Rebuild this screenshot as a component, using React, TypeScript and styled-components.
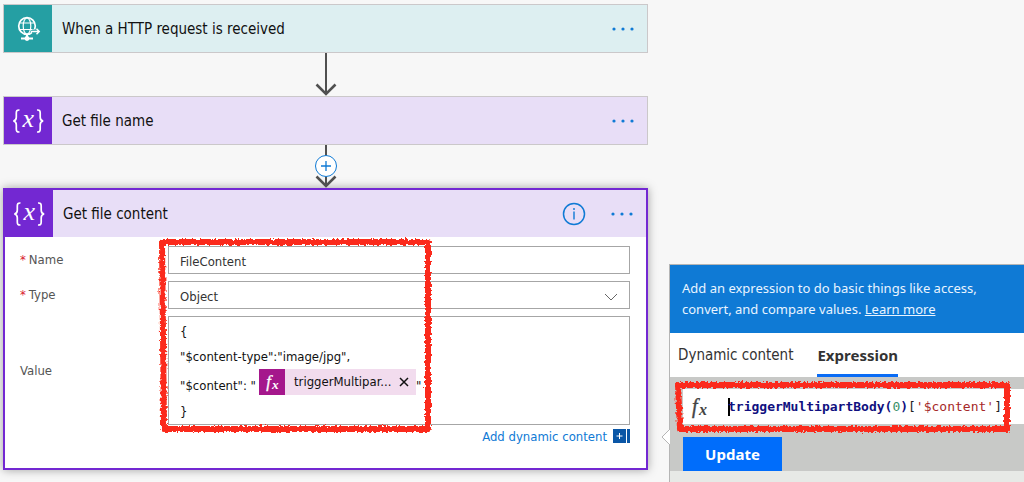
import React from 'react';
import styled, { createGlobalStyle, css } from 'styled-components';

const ui = '"DejaVu Sans Condensed", "DejaVu Sans", sans-serif';
const noto = '"Noto Sans", "Open Sans", sans-serif';
const blue = '#0f7ad5';
const purple = '#7328d2';

const GlobalStyle = createGlobalStyle`
  * { box-sizing: border-box; }
  body { margin: 0; background: #f7f7f7; font-family: ${ui}; color: #111; }
  button, input, select { font: inherit; color: inherit; }
  svg { display: block; }
`;

const Page = styled.main`
  display: grid;
  grid-template-columns: minmax(0, 645fr) minmax(0, 355fr);
  column-gap: 21px;
  padding-left: 3px;
  min-height: 100vh;
  overflow: hidden;
`;

const Flow = styled.section`
  display: flex;
  flex-direction: column;
  padding: 4px 0 12px;
`;

const Card = styled.article<{ $selected?: boolean }>`
  background: #fff;
  border: 1px solid #cbc8ca;
  ${p => p.$selected && css`
    border: 2px solid ${purple};
    box-shadow: 0 0 9px rgba(0, 0, 0, 0.35);
  `}
`;

const CardHeader = styled.header<{ $tint: string }>`
  display: flex;
  align-items: center;
  height: 47px;
  padding-right: 8px;
  background: ${p => p.$tint};
`;

const IconTile = styled.span<{ $color: string }>`
  display: grid;
  place-items: center;
  align-self: stretch;
  flex: none;
  width: 48px;
  background: ${p => p.$color};
`;

const CardTitle = styled.h2`
  flex: 1;
  margin: 0 0 0 10px;
  font-size: 15px;
  font-weight: 400;
  line-height: 20px;
`;

const IconButton = styled.button`
  display: grid;
  place-items: center;
  height: 32px;
  padding: 0 4px;
  border: 0;
  background: none;
  color: ${blue};
`;

const InfoButton = styled(IconButton)`
  margin-right: 16px;
`;

const Connector = styled.div`
  position: relative;
  display: flex;
  justify-content: center;
  height: 43px;
`;

const InsertButton = styled.button`
  position: absolute;
  top: 10px;
  left: 50%;
  transform: translateX(-50%);
  display: grid;
  place-items: center;
  width: 22px;
  height: 22px;
  padding: 0;
  border: 1px solid ${blue};
  border-radius: 50%;
  background: #fff;
  color: ${blue};
`;

const Form = styled.form`
  position: relative;
  display: grid;
  grid-template-columns: 148px minmax(0, 1fr);
  row-gap: 7px;
  padding: 9px 16px 22px 15px;
`;

const Label = styled.label<{ $middle?: boolean }>`
  align-self: ${p => (p.$middle ? 'center' : 'start')};
  padding-top: ${p => (p.$middle ? 0 : '4px')};
  color: #555;
  font-size: 13px;
  line-height: 20px;
`;

const Required = styled.span`
  margin-right: 3px;
  color: #d9182d;
`;

const field = css`
  width: 100%;
  border: 1px solid #a6a6a6;
  background: #fff;
  color: #333;
  font-size: 13px;
`;

const TextField = styled.input`
  ${field}
  height: 28px;
  padding: 2px 11px 0;
`;

const SelectWrap = styled.div`
  position: relative;
`;

const SelectField = styled.select`
  ${field}
  display: block;
  height: 28px;
  padding: 2px 11px 0;
  appearance: none;
  border-radius: 0;
`;

const Chevron = styled.svg`
  position: absolute;
  right: 12px;
  top: 12px;
  pointer-events: none;
`;

const ValueEditor = styled.div`
  ${field}
  padding: 2px 11px 0;
  color: #111;
  line-height: 25px;
  outline: 0;
`;

const EditorLine = styled.div`
  height: 25px;
`;

const TokenLine = styled.div`
  display: flex;
  height: 30px;
  line-height: 33px;
  white-space: pre;
`;

const Token = styled.span`
  display: flex;
  align-items: center;
  width: 157px;
  height: 26px;
  margin-left: 3px;
  background: #f2dcee;
  line-height: 26px;
`;

const TokenIcon = styled.span`
  display: grid;
  place-items: center;
  flex: none;
  width: 26px;
  height: 26px;
  margin-right: 9px;
  background: #a5178c;
`;

const TokenText = styled.span`
  flex: 1;
`;

const RemoveButton = styled.button`
  display: grid;
  place-items: center;
  width: 24px;
  height: 26px;
  padding: 0;
  border: 0;
  background: none;
`;

const DynamicRow = styled.div`
  display: flex;
  grid-column: 2;
  align-items: center;
  justify-content: flex-end;
  gap: 6px;
  margin-top: -6px;
  height: 20px;
  color: ${blue};
  font-size: 13px;
`;

const DynamicLink = styled.a`
  color: inherit;
  text-decoration: none;
`;

const Marker = styled.svg`
  position: absolute;
  pointer-events: none;
`;

const FormMarker = styled(Marker)`
  left: 150px;
  top: -3px;
`;

const ExpressionMarker = styled(Marker)`
  left: 1px;
  top: -2px;
`;

const Panel = styled.aside`
  position: relative;
  display: flex;
  flex-direction: column;
  margin-top: 264px;
  border: solid #b5b5b5;
  border-width: 1px 0 0 1px;
  background: #e7e9e6;
`;

const Callout = styled.svg`
  position: absolute;
  left: -9px;
  top: 163px;
`;

const Intro = styled.p`
  margin: 0;
  padding: 13px 12px;
  background: ${blue};
  color: #e9f4ff;
  font: 13px/21px ${noto};
`;

const IntroLink = styled.a`
  color: inherit;
  text-decoration: underline;
`;

const Tabs = styled.div`
  display: flex;
  gap: 24px;
  height: 44px;
  padding: 0 8px;
  background: #fff;
`;

const Tab = styled.button<{ $active?: boolean }>`
  height: 44px;
  padding: 2px 0 0;
  border: 0;
  border-bottom: 3px solid ${p => (p.$active ? '#0a6cf5' : 'transparent')};
  background: none;
  color: #333;
  font: ${p => (p.$active ? 700 : 400)} 15px/22px ${p => (p.$active ? noto : ui)};
`;

const PanelBody = styled.div`
  position: relative;
  display: flex;
  flex-direction: column;
  align-items: flex-start;
  gap: 13px;
  padding: 12px 0 0 13px;
  background: #c8c9c7;
`;

const ExpressionBar = styled.div`
  display: flex;
  align-items: center;
  align-self: stretch;
  height: 35px;
  padding-left: 4px;
  background: #fff;
`;

const ExpressionInput = styled.div`
  flex: 1;
  margin-left: 17px;
  overflow: hidden;
  color: #222;
  font: 13px/20px "DejaVu Sans Mono", monospace;
  white-space: pre;
  outline: 0;
`;

const Caret = styled.span`
  display: inline-block;
  width: 2px;
  height: 18px;
  margin-right: -2px;
  background: #000;
  vertical-align: middle;
`;

const FunctionName = styled.span`
  color: #101080;
  font-weight: 700;
`;

const NumberLiteral = styled.span`
  color: #3a9068;
`;

const StringLiteral = styled.span`
  color: #a62828;
`;

const UpdateButton = styled.button`
  width: 99px;
  height: 34px;
  padding: 0;
  border: 0;
  background: #006dfb;
  color: #fff;
  font: 700 15px ${noto};
`;

const More = () => (
  <IconButton type="button" aria-label="More">
    <svg width="24" height="4" fill="currentColor">
      <circle cx="3" cy="2" r="1.6" /><circle cx="12" cy="2" r="1.6" /><circle cx="21" cy="2" r="1.6" />
    </svg>
  </IconButton>
);

const VariableIcon = () => (
  <svg width="36" height="38" viewBox="0 -6 36 38" fill="none" stroke="#fff" strokeWidth="1.7">
    <path d="M9.500 2C6.900 1.800 6.300 2.800 6.300 5v4.200c0 2.400-.7 3.500-3 3.800 2.300.3 3 1.400 3 3.800V21c0 2.200.6 3.200 3.200 3" />
    <path d="M27 2c2.600-.2 3.200.8 3.200 3v4.200c0 2.400.7 3.500 3 3.800-2.300.3-3 1.400-3 3.800V21c0 2.200-.6 3.200-3.200 3" />
    <text x="12.500" y="18.500" fontFamily="Liberation Serif, serif" fontStyle="italic" fontSize="26" fill="#fff" stroke="none">x</text>
  </svg>
);

const GlobeIcon = () => (
  <svg width="26" height="26" viewBox="0 0 26 26" fill="none" stroke="#fff" strokeWidth="1.2">
    <circle cx="12" cy="10" r="8.300" strokeWidth="1.700" />
    <ellipse cx="12" cy="10" rx="3.800" ry="8" />
    <path d="M5 7h14M5 13.500h14" strokeWidth="1.200" />
    <path d="M12 18v3M6 22.500h12M9.500 22.500h5" strokeWidth="2" />
    <circle cx="12" cy="22.500" r="1.800" fill="#fff" />
    <path d="M17 15.500h7" stroke="#259fa3" strokeWidth="4" />
    <path d="M16 15.500h8M21.500 12.800l2.700 2.700-2.700 2.700" strokeWidth="1.500" />
  </svg>
);

const FxIcon = ({ size, color }: { size: number; color: string }) => (
  <svg width={size} height={size} viewBox="0 0 24 24" fill={color} stroke={color} strokeWidth="0.4" fontFamily="Liberation Serif, serif" fontStyle="italic">
    <text x="5" y="18" fontSize="20">f</text>
    <text x="12" y="20" fontSize="16" fontWeight="700" stroke="none">x</text>
  </svg>
);

const Arrow = () => (
  <svg width="22" height="43" fill="none" stroke="#505050">
    <path d="M11 0v41" strokeWidth="2" />
    <path d="M1.500 31.500L11 41l9.500-9.500" strokeWidth="2.600" />
  </svg>
);

const Brush = ({ id, w, h, d }: { id: string; w: number; h: number; d: string }) => (
  <>
    <defs>
      <filter id={id} filterUnits="userSpaceOnUse" x="0" y="0" width={w} height={h}>
        <feTurbulence type="fractalNoise" baseFrequency="0.4" numOctaves="2" seed="4" />
        <feDisplacementMap in="SourceGraphic" scale="5" xChannelSelector="R" yChannelSelector="G" />
      </filter>
    </defs>
    <path d={d} fill="none" stroke="#fb2c1a" strokeWidth="6" strokeLinejoin="round" filter={`url(#${id})`} />
  </>
);

export default function App() {
  return (
    <>
      <GlobalStyle />
      <Page>
        <Flow>
          <Card>
            <CardHeader $tint="#ddeff1">
              <IconTile $color="#259fa3"><GlobeIcon /></IconTile>
              <CardTitle>When a HTTP request is received</CardTitle>
              <More />
            </CardHeader>
          </Card>
          <Connector><Arrow /></Connector>
          <Card>
            <CardHeader $tint="#e8def7">
              <IconTile $color={purple}><VariableIcon /></IconTile>
              <CardTitle>Get file name</CardTitle>
              <More />
            </CardHeader>
          </Card>
          <Connector>
            <Arrow />
            <InsertButton type="button" aria-label="Insert a step">
              <svg width="12" height="12" stroke="currentColor" strokeWidth="1.3"><path d="M6 1v10M1 6h10" /></svg>
            </InsertButton>
          </Connector>
          <Card $selected>
            <CardHeader $tint="#e8def7">
              <IconTile $color={purple}><VariableIcon /></IconTile>
              <CardTitle>Get file content</CardTitle>
              <InfoButton type="button" aria-label="Information">
                <svg width="24" height="24" fill="none" stroke="currentColor" strokeWidth="1.5">
                  <circle cx="12" cy="12" r="10.500" /><path d="M12 9.500v8M12 6v2" strokeWidth="1.400" />
                </svg>
              </InfoButton>
              <More />
            </CardHeader>
            <Form>
              <Label htmlFor="name"><Required>*</Required>Name</Label>
              <TextField id="name" defaultValue="FileContent" />
              <Label htmlFor="type"><Required>*</Required>Type</Label>
              <SelectWrap>
                <SelectField id="type" defaultValue="Object"><option>Object</option></SelectField>
                <Chevron width="14" height="8" fill="none" stroke="#666"><path d="M1 1l6 6 6-6" /></Chevron>
              </SelectWrap>
              <Label as="span" id="value-label" $middle>Value</Label>
              <ValueEditor role="textbox" aria-multiline="true" aria-labelledby="value-label" contentEditable suppressContentEditableWarning spellCheck={false}>
                <EditorLine>{'{'}</EditorLine>
                <EditorLine>"$content-type":"image/jpg",</EditorLine>
                <TokenLine>
                  <span>{'"$content": "'}</span>
                  <Token contentEditable={false}>
                    <TokenIcon><FxIcon size={20} color="#fff" /></TokenIcon>
                    <TokenText>triggerMultipar...</TokenText>
                    <RemoveButton type="button" aria-label="Remove">
                      <svg width="10" height="10" stroke="#111" strokeWidth="1.5"><path d="M1 1l8 8M9 1l-8 8" /></svg>
                    </RemoveButton>
                  </Token>
                  <span>"</span>
                </TokenLine>
                <EditorLine>{'}'}</EditorLine>
              </ValueEditor>
              <DynamicRow>
                <DynamicLink href="#dynamic">Add dynamic content</DynamicLink>
                <svg width="17" height="14" aria-hidden="true">
                  <path d="M0 0h13v14H0zM14 0h3v14h-3z" fill="#0a56a6" />
                  <path d="M6.500 4v6M3.500 7h6" stroke="#fff" />
                </svg>
              </DynamicRow>
              <FormMarker width="282" height="204" aria-hidden="true">
                <Brush id="brush-form" w={282} h={204} d="M7 8H273V195H9Z" />
              </FormMarker>
            </Form>
          </Card>
        </Flow>
        <Panel>
          <Callout width="10" height="18"><path d="M10 0L1 9l9 9" fill="#fff" stroke="#b5b5b5" /></Callout>
          <Intro>
            Add an expression to do basic things like access,<br />
            convert, and compare values. <IntroLink href="#learn">Learn more</IntroLink>
          </Intro>
          <Tabs role="tablist">
            <Tab type="button" role="tab" aria-selected={false}>Dynamic content</Tab>
            <Tab type="button" role="tab" aria-selected $active>Expression</Tab>
          </Tabs>
          <PanelBody>
            <ExpressionBar>
              <FxIcon size={24} color="#444" />
              <ExpressionInput role="textbox" aria-label="Expression" contentEditable suppressContentEditableWarning spellCheck={false}>
                <Caret /><FunctionName>triggerMultipartBody(</FunctionName><NumberLiteral>0</NumberLiteral><FunctionName>)</FunctionName>[<StringLiteral>'$content'</StringLiteral>]
              </ExpressionInput>
            </ExpressionBar>
            <UpdateButton type="button">Update</UpdateButton>
            <ExpressionMarker width="346" height="62" aria-hidden="true">
              <Brush id="brush-expression" w={346} h={62} d="M7 10H336V54H9Z" />
            </ExpressionMarker>
          </PanelBody>
        </Panel>
      </Page>
    </>
  );
}
